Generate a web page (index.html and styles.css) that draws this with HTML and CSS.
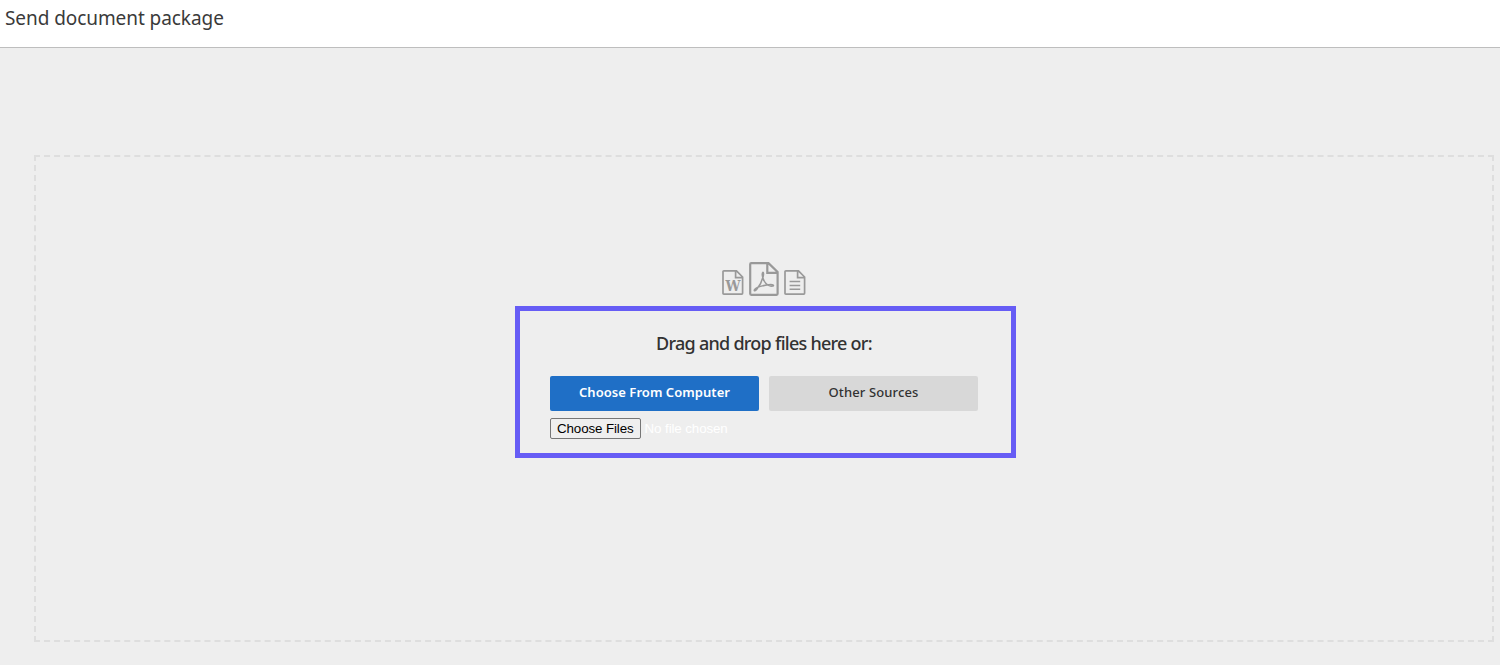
FILE: index.html
```html
<!DOCTYPE html>
<html lang="en">
<head>
  <meta charset="UTF-8">
  <meta name="viewport" content="width=device-width, initial-scale=1.0">
  <title>Send document package</title>
  <link rel="stylesheet" href="styles.css">
</head>
<body>

  <header>
    <h1>Send document package</h1>
  </header>

  <main>
    <div class="dropzone">
      <div class="file-icons">
        <svg width="22" height="26" viewBox="0 0 22 26">
          <path d="M2 .9H14.5L20.6 7V23.2Q20.6 24.1 19.7 24.1H1.9Q1 24.1 1 23.2V1.8Q1 .9 1.9 .9Z M13.6 1.2V7.6H20.2" />
          <text x="3.4" y="20.9" textLength="15" lengthAdjust="spacingAndGlyphs">W</text>
        </svg>
        <svg class="pdf" width="30" height="34" viewBox="0 0 30 34">
          <path d="M2.2 1.2H19.5L28.6 10V31.8Q28.6 32.8 27.6 32.8H2.2Q1.2 32.8 1.2 31.8V2.2Q1.2 1.2 2.2 1.2Z M18.3 1.5V10.9H28.3" />
          <path class="thin" d="M13.9 10.3C13 10.8 13.2 13.5 13.9 15.9C15.2 20 18.2 23.2 21.5 24.1C23.2 24.4 24.5 24 24.5 23.4C24.4 22.3 20.5 22.4 16.5 23.2C11.5 24.1 6.5 26 5.4 27.9C4.8 29.2 6.3 29.1 7.8 27.3C10.3 24.2 13.1 18.8 14.2 14.5C14.7 12.2 14.7 10.3 13.9 10.3Z" />
        </svg>
        <svg width="22" height="26" viewBox="0 0 22 26">
          <path d="M2 .9H14.5L20.6 7V23.2Q20.6 24.1 19.7 24.1H1.9Q1 24.1 1 23.2V1.8Q1 .9 1.9 .9Z M13.6 1.2V7.6H20.2" />
          <path class="thin" d="M5.6 11.5H16.2M5.6 15.4H16.2M5.6 19.3H16.2" />
        </svg>
      </div>

      <div class="upload-box">
        <h2>Drag and drop files here or:</h2>
        <div class="buttons">
          <button class="btn primary">Choose From Computer</button>
          <button class="btn">Other Sources</button>
        </div>
        <input type="file" class="file-input" multiple>
      </div>
    </div>
  </main>

</body>
</html>
```

FILE: styles.css
```css
* {
  box-sizing: border-box;
}

body {
  margin: 0;
  height: 665px;
  overflow: hidden;
  font-family: "Noto Sans", sans-serif;
  color: #323232;
  background-color: #eee;
}

header {
  height: 48px;
  padding: 4px 5px;
  background-color: #fff;
  border-bottom: 1px solid #bebebe;
}

h1 {
  margin: 0;
  font-size: 19px;
  font-weight: 400;
  line-height: 28px;
  letter-spacing: -0.07px;
  color: #3a3a3a;
}

main {
  padding: 107px 6px 0 34px;
}

.dropzone {
  display: flex;
  flex-direction: column;
  align-items: center;
  height: 487px;
  padding-top: 105px;
  border: 2px dashed #dedede;
}

.file-icons {
  display: flex;
  align-items: flex-end;
  gap: 5px;
  height: 34px;
}

.file-icons svg {
  fill: none;
  stroke: #999;
  stroke-width: 1.7;
}

.file-icons .pdf {
  stroke-width: 2.2;
}

.file-icons .thin {
  stroke-width: 1.5;
}

.file-icons text {
  fill: #999;
  stroke: none;
  font: bold 14px "DejaVu Serif", serif;
}

.upload-box {
  width: 501px;
  height: 152px;
  margin: 10px 0 0 3px;
  padding: 20px 33px 0 30px;
  border: 5px solid #665cf5;
}

h2 {
  margin: 0 0 20px;
  font-size: 18px;
  font-weight: 500;
  line-height: 25px;
  letter-spacing: -0.74px;
  text-align: center;
}

.buttons {
  display: flex;
  gap: 10px;
  margin-bottom: 7px;
}

.btn {
  flex: 1;
  height: 35px;
  padding: 0 0 3px;
  border: none;
  border-radius: 2px;
  font: 500 13px "Noto Sans", sans-serif;
  letter-spacing: 0.12px;
  color: #323232;
  background-color: #d8d8d8;
  cursor: pointer;
}

.btn.primary {
  font-weight: 600;
  letter-spacing: 0.05px;
  color: #fff;
  background-color: #1f6fc6;
}

.file-input {
  display: block;
  font: 13.333px "Liberation Sans", Arial, sans-serif;
  letter-spacing: -0.1px;
  color: #fff;
}

.file-input::file-selector-button {
  height: 21px;
  padding: 1px 6px;
  border: 1px solid #767676;
  border-radius: 2px;
  font: 13.333px "Liberation Sans", Arial, sans-serif;
  letter-spacing: -0.1px;
  color: #000;
  background-color: #efefef;
}
```
